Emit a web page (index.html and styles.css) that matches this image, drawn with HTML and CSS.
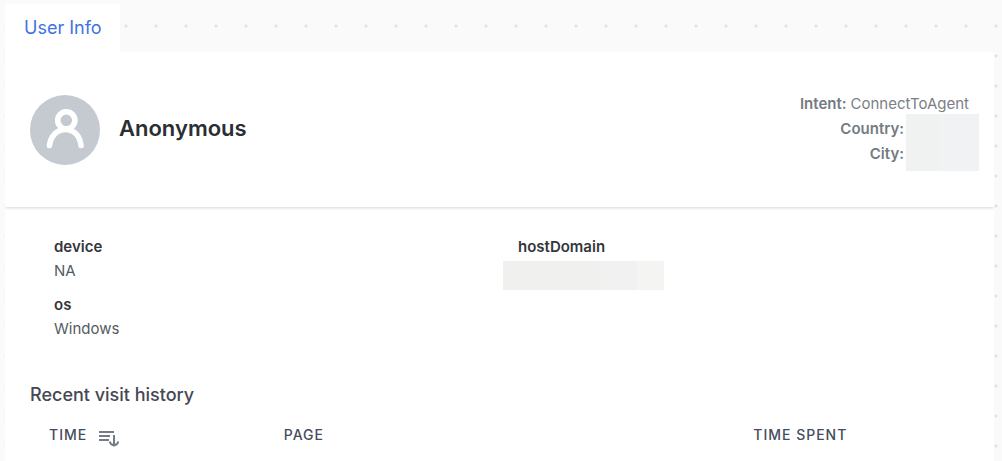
FILE: index.html
```html
<!DOCTYPE html>
<html lang="en">
<head>
<meta charset="utf-8">
<meta name="viewport" content="width=device-width, initial-scale=1">
<title>User Info</title>
<link rel="stylesheet" href="styles.css">
</head>
<body>
<nav class="tabs"><a class="tab" href="#user-info">User Info</a></nav>
<main class="panel" id="user-info">
  <header class="profile">
    <svg class="avatar" viewBox="0 0 70 70" aria-hidden="true">
      <circle cx="35" cy="35" r="35" fill="#c5cad1"/>
      <g fill="none" stroke="#fff" stroke-width="5.6" stroke-linecap="round">
        <circle cx="36.300" cy="25.300" r="8.600"/>
        <path d="M19.500 50.500C20.500 41 27 34.500 35.500 34.500S50 41 51 50.500"/>
      </g>
    </svg>
    <h1 class="name">Anonymous</h1>
    <dl class="meta">
      <div class="meta-row"><dt>Intent:</dt><dd>ConnectToAgent</dd></div>
      <div class="meta-row"><dt>Country:</dt><dd class="hidden-value"></dd></div>
      <div class="meta-row"><dt>City:</dt><dd class="hidden-value"></dd></div>
      <div class="meta-mask"></div>
    </dl>
  </header>
  <section class="details">
    <dl class="column">
      <dt>device</dt><dd>NA</dd>
      <dt>os</dt><dd>Windows</dd>
    </dl>
    <dl class="column">
      <dt>hostDomain</dt><dd class="domain-mask"></dd>
    </dl>
  </section>
  <section class="history">
    <h2 class="history-title">Recent visit history</h2>
    <table class="visits">
      <thead>
        <tr>
          <th class="time" scope="col"><span class="sortable">TIME
            <button class="sort" type="button" aria-label="Sort by time">
              <svg viewBox="0 0 20 18" width="20" height="18" fill="none" stroke="#767b88" stroke-width="2" aria-hidden="true">
                <path d="M0 3h15M0 7h11M0 11h10"/>
                <path stroke-linejoin="round" d="M15 6v10M10.500 12.500l1.500 2.500 3 1.500 3-1.500 1.500-2.500"/>
              </svg>
            </button></span></th>
          <th class="page" scope="col">PAGE</th>
          <th class="spent" scope="col">TIME SPENT</th>
        </tr>
      </thead>
    </table>
  </section>
</main>
</body>
</html>
```
FILE: styles.css
```css
* { box-sizing: border-box; }

body {
  margin: 0;
  min-height: 100vh;
  padding: 4px 8px 0 5px;
  display: flex;
  flex-direction: column;
  font-family: Inter, "Liberation Sans", sans-serif;
  font-size: 15px;
  color: #555b62;
  background: #fafafa radial-gradient(circle at 15px 15px, #e2e2e2 1px, transparent 2px) -9px 11px / 30px 30px;
}

h1, h2, dl, dd { margin: 0; }

.tabs { display: flex; }

.tab {
  padding: 0 18px 0 19px;
  font-size: 18px;
  line-height: 48px;
  color: #3f72e3;
  background: #fff;
  text-decoration: none;
}

.panel { flex: 1; background: #fff; }

.profile {
  display: flex;
  align-items: center;
  min-height: 155px;
  padding: 0 25px;
  box-shadow: 0 1px 3px rgba(0, 0, 0, 0.16);
  clip-path: inset(0 0 -5px 0);
}

.avatar { width: 70px; height: 70px; flex: none; }

.name {
  margin: 0 0 3px 19px;
  font-size: 22px;
  font-weight: 600;
  line-height: 32px;
  color: #2b2e33;
}

.meta {
  position: relative;
  margin-left: auto;
  padding-bottom: 2px;
  line-height: 25px;
  color: #7a7f85;
}

.meta-row { display: flex; justify-content: flex-end; gap: 4px; }
.meta-row dt { font-weight: 600; color: #747b83; }
.hidden-value { width: 61px; }

.meta-mask {
  position: absolute;
  top: 23px;
  right: -10px;
  width: 73px;
  height: 57px;
  background: linear-gradient(90deg, #f0f2f2 45%, #f0f2f4 45%);
}

.details {
  display: grid;
  grid-template-columns: 1fr 1fr;
  padding: 28px 12px 0 49px;
  line-height: 24px;
}

.column dt { font-weight: 600; color: #33363b; }
.column dd { margin-bottom: 10px; }

.column .domain-mask {
  width: 161px;
  height: 29px;
  margin: 2px 0 0 -15px;
  background: linear-gradient(90deg, #f0f0ee 60%, #f1f1f2 60%, #f1f1f2 83%, #f4f4f3 83%);
}

.history { padding: 32px 25px 0; }

.history-title {
  font-size: 18px;
  font-weight: 500;
  line-height: 24px;
  color: #454754;
}

.visits {
  width: 100%;
  margin-top: 16px;
  table-layout: fixed;
  border-collapse: collapse;
}

.visits th {
  padding: 0 0 0 19px;
  font-size: 14px;
  font-weight: 500;
  line-height: 24px;
  letter-spacing: 1px;
  text-align: left;
  color: #454c60;
}

.time { width: 25%; }
.page { width: 50%; }
.spent { width: 25%; }

.sortable { display: flex; gap: 12px; }

.sort {
  display: flex;
  align-items: flex-end;
  padding: 0;
  border: 0;
  background: none;
}
```
